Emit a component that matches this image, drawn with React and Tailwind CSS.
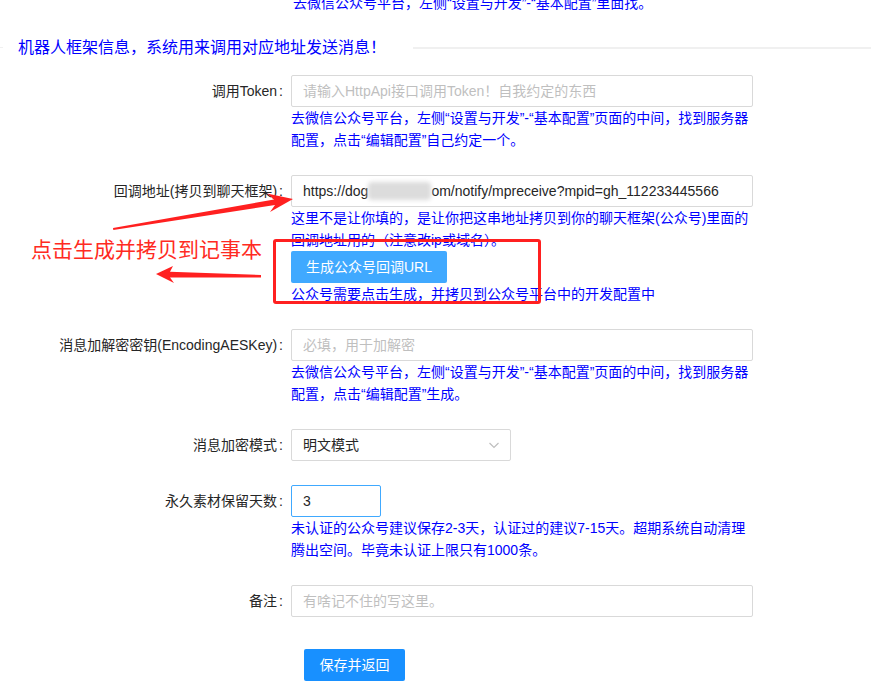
import React from 'react';

const FONT = "font-['Liberation_Sans','Noto_Sans_CJK_SC',sans-serif]";

function Row({ label, children, help, className = 'mb-[24px]' }) {
  return (
    <div className={`flex ${className}`}>
      <div className="w-[291px] shrink-0 text-right pr-[8px] h-[32px] leading-[32px] text-[#262626] whitespace-nowrap">
        {label}<span className="ml-[2px]">:</span>
      </div>
      <div className="w-[462px] shrink-0">
        {children}
        {help ? (
          <div className="text-[#0000ff] leading-[22px] whitespace-nowrap">
            {help.map((line, i) => <div key={i}>{line}</div>)}
          </div>
        ) : null}
      </div>
    </div>
  );
}

function Input({ placeholder, value, className = 'w-[462px] border-[#d9d9d9]' }) {
  return (
    <div className={`h-[32px] border rounded-[2px] px-[11px] leading-[30px] whitespace-nowrap overflow-hidden ${className}`}>
      {value ? <span className="text-[#262626]">{value}</span> : <span className="text-[#bfbfbf]">{placeholder}</span>}
    </div>
  );
}

export default function App() {
  const cfgHelp = (tail) => [
    '去微信公众号平台，左侧“设置与开发”-“基本配置”页面的中间，找到服务器',
    tail,
  ];

  return (
    <div className={`relative w-[871px] h-[687px] overflow-hidden bg-white text-[14px] ${FONT}`}>
      <div className="-mt-[8px] pl-[293px] leading-[22px] text-[#0000ff] whitespace-nowrap">
        去微信公众号平台，左侧“设置与开发”-“基本配置”里面找。
      </div>

      <div className="mt-[21px] flex items-center h-[25px]">
        <div className="w-[3px] h-px bg-[#f0f0f0]" />
        <div className="px-[15px] text-[16px] leading-[25px] text-[#0000ff] whitespace-nowrap">
          机器人框架信息，系统用来调用对应地址发送消息！
        </div>
        <div className="flex-1 ml-[12px] h-[2px] bg-[#f0f0f0]" />
      </div>

      <div className="mt-[15px]">
        <Row label="调用Token" help={cfgHelp('配置，点击“编辑配置”自己约定一个。')}>
          <Input placeholder="请输入HttpApi接口调用Token！自我约定的东西" />
        </Row>

        <Row label="回调地址(拷贝到聊天框架)">
          <div className="w-[462px] h-[32px] border border-[#d9d9d9] rounded-[2px] pl-[11px] leading-[30px] whitespace-nowrap overflow-hidden text-[#262626] flex items-center">
            <span>https://dog</span>
            <span className="inline-block w-[63px] h-[18px] rounded-[4px] bg-[#dcdcdc] blur-[2px]" />
            <span>om/notify/mpreceive?mpid=gh_112233445566</span>
          </div>
          <div className="text-[#0000ff] leading-[22px] whitespace-nowrap">
            <div>这里不是让你填的，是让你把这串地址拷贝到你的聊天框架(公众号)里面的</div>
            <div>回调地址用的（注意改ip或域名）。</div>
          </div>
          <button className="h-[32px] px-[15px] rounded-[2px] bg-[#40a9ff] text-white leading-[32px]">
            生成公众号回调URL
          </button>
          <div className="text-[#0000ff] leading-[22px] whitespace-nowrap">
            公众号需要点击生成，并拷贝到公众号平台中的开发配置中
          </div>
        </Row>

        <Row label="消息加解密密钥(EncodingAESKey)" help={cfgHelp('配置，点击“编辑配置”生成。')}>
          <Input placeholder="必填，用于加解密" />
        </Row>

        <Row label="消息加密模式">
          <div className="w-[220px] h-[32px] border border-[#d9d9d9] rounded-[2px] pl-[11px] pr-[10px] flex items-center justify-between text-[#262626]">
            <span>明文模式</span>
            <svg width="12" height="12" viewBox="0 0 12 12" fill="none">
              <path d="M1.5 4 L6 8.5 L10.5 4" stroke="#bfbfbf" strokeWidth="1.2" />
            </svg>
          </div>
        </Row>

        <Row
          label="永久素材保留天数"
          help={[
            '未认证的公众号建议保存2-3天，认证过的建议7-15天。超期系统自动清理',
            '腾出空间。毕竟未认证上限只有1000条。',
          ]}
        >
          <Input value="3" className="w-[90px] border-[#40a9ff]" />
        </Row>

        <Row label="备注" className="mb-[32px]">
          <Input placeholder="有啥记不住的写这里。" />
        </Row>

        <div className="pl-[304px]">
          <button className="h-[32px] w-[101px] rounded-[2px] bg-[#1890ff] text-white leading-[32px]">
            保存并返回
          </button>
        </div>
      </div>

      {/* annotations */}
      <div className="absolute left-[31px] top-[237px] text-[21px] leading-[25px] text-[#ff2a22] whitespace-nowrap">
        点击生成并拷贝到记事本
      </div>
      <div className="absolute left-[273px] top-[239px] w-[268px] h-[65px] border-[3px] border-[#ff2020] rounded-[3px] pointer-events-none" />
      <svg className="absolute left-0 top-0 pointer-events-none" width="871" height="687">
        <polygon
          fill="#ff2020"
          points="113,228 274,199.5 267,193.5 293,199 270,212 275,205 113.3,230"
        />
        <polygon
          fill="#ff2020"
          points="156,274 173,266 170,271.8 261,275 261,277.5 170,277.5 174,283"
        />
      </svg>
    </div>
  );
}
